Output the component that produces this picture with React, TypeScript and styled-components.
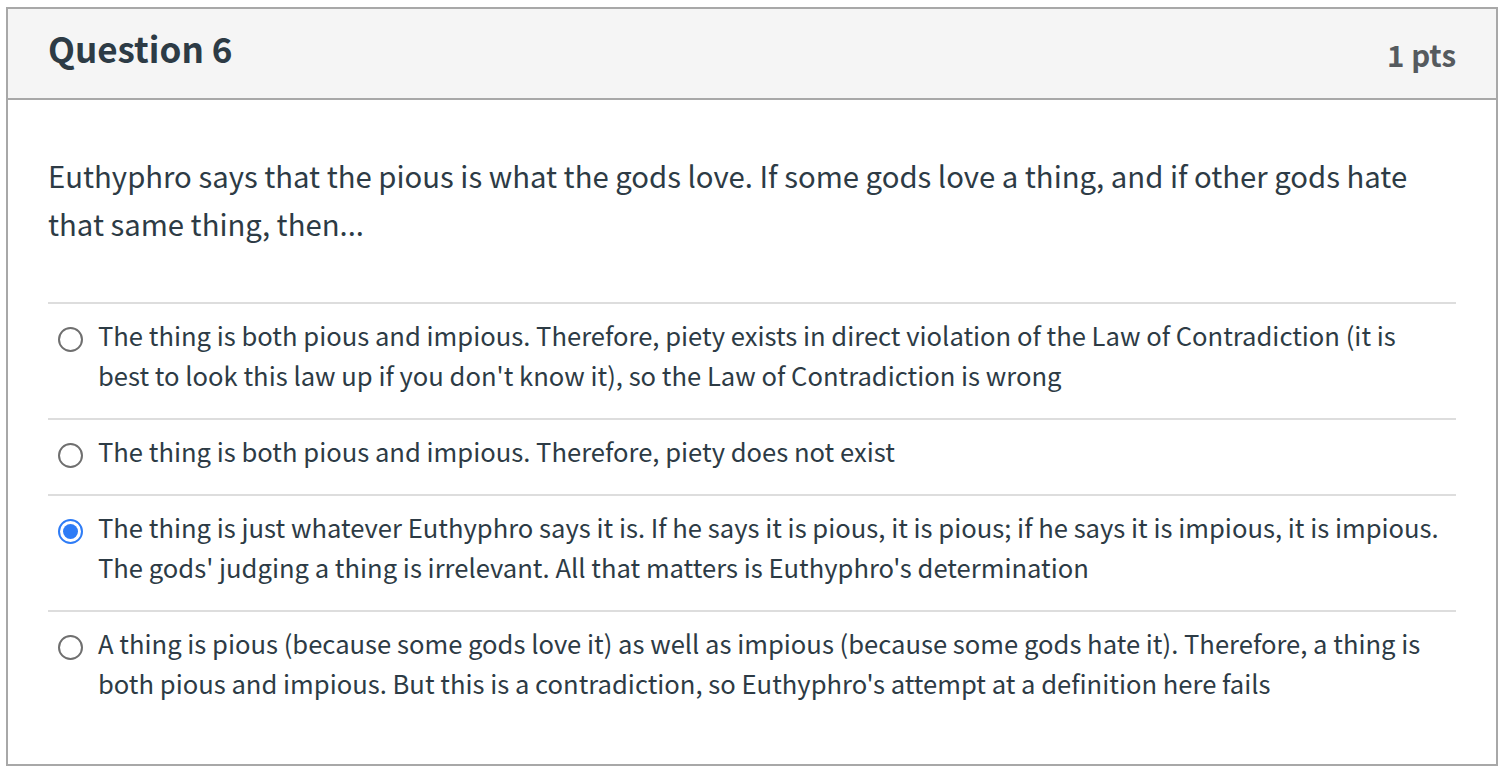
import React from "react";
import styled, { createGlobalStyle } from "styled-components";

const Global = createGlobalStyle`
  html, body { margin: 0; padding: 0; background: #ffffff; }
  body { font-family: "Noto Sans CJK KR", "Noto Sans", sans-serif; color: #2d3b45; }
  * { box-sizing: border-box; }
`;

const Page = styled.div`
  padding: 7px 14px 5px 6px;
  width: 1512px;
`;

const Card = styled.section`
  border: 2px solid #a8a8a8;
  background: #fff;
`;

const Header = styled.header`
  display: flex;
  justify-content: space-between;
  align-items: center;
  height: 91px;
  padding: 0 40px 0 40px;
  background: #f5f5f5;
  border-bottom: 2px solid #a8a8a8;
`;

const Title = styled.h2`
  margin: -12px 0 0 0;
  font-size: 35px;
  line-height: 48px;
  font-weight: 700;
  color: #2d3b45;
`;

const Points = styled.span`
  margin-top: 0;
  font-size: 29.5px;
  line-height: 40px;
  font-weight: 700;
  color: #555a5e;
`;

const Body = styled.div`
  padding: 51px 40px 38px 40px;
`;

const Prompt = styled.p`
  margin: 0 0 55px 0;
  font-size: 29.3px;
  line-height: 48px;
  color: #2d3b45;
`;

const Answers = styled.div`
  display: flex;
  flex-direction: column;
`;

const Answer = styled.label`
  display: flex;
  align-items: flex-start;
  gap: 15px;
  padding: 11px 10px 23px 10px;
  border-top: 2px solid #dddddd;
`;

const Radio = styled.span<{ $checked?: boolean }>`
  flex: 0 0 auto;
  width: 25px;
  height: 25px;
  margin-top: 12px;
  border-radius: 50%;
  border: 2px solid ${(p) => (p.$checked ? "#2e7cf6" : "#6f6f6f")};
  display: flex;
  align-items: center;
  justify-content: center;
  &::after {
    content: "";
    display: ${(p) => (p.$checked ? "block" : "none")};
    width: 15px;
    height: 15px;
    border-radius: 50%;
    background: #2e7cf6;
  }
`;

const AnswerText = styled.span`
  font-size: 25.6px;
  line-height: 40px;
  color: #2d3b45;
`;

const answers = [
  {
    text: "The thing is both pious and impious. Therefore, piety exists in direct violation of the Law of Contradiction (it is best to look this law up if you don't know it), so the Law of Contradiction is wrong",
    checked: false,
  },
  {
    text: "The thing is both pious and impious. Therefore, piety does not exist",
    checked: false,
  },
  {
    text: "The thing is just whatever Euthyphro says it is. If he says it is pious, it is pious; if he says it is impious, it is impious. The gods' judging a thing is irrelevant. All that matters is Euthyphro's determination",
    checked: true,
  },
  {
    text: "A thing is pious (because some gods love it) as well as impious (because some gods hate it). Therefore, a thing is both pious and impious. But this is a contradiction, so Euthyphro's attempt at a definition here fails",
    checked: false,
  },
];

export default function App() {
  return (
    <>
      <Global />
      <Page>
        <Card>
          <Header>
            <Title>Question 6</Title>
            <Points>1 pts</Points>
          </Header>
          <Body>
            <Prompt>
              Euthyphro says that the pious is what the gods love. If some gods love a thing, and if other gods hate that same thing, then...
            </Prompt>
            <Answers>
              {answers.map((a, i) => (
                <Answer key={i}>
                  <Radio $checked={a.checked} />
                  <AnswerText>{a.text}</AnswerText>
                </Answer>
              ))}
            </Answers>
          </Body>
        </Card>
      </Page>
    </>
  );
}
